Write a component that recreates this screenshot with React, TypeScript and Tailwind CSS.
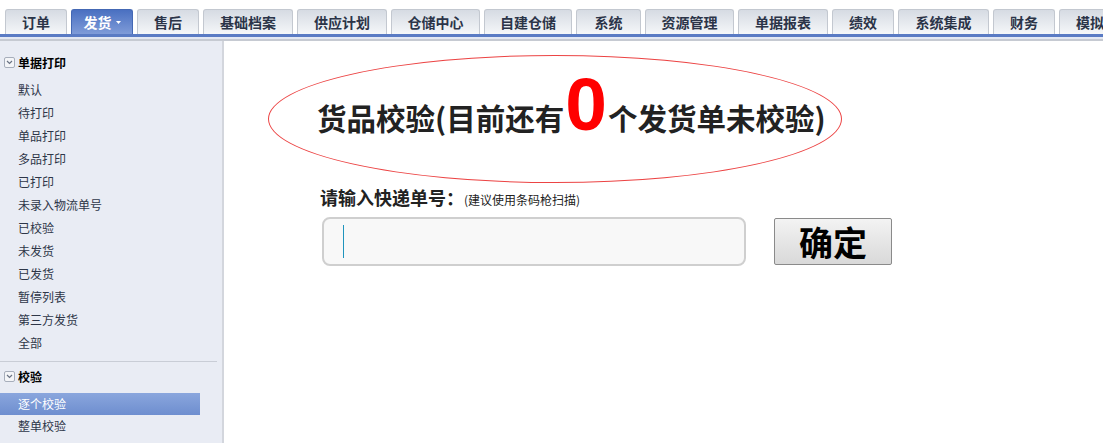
import { useState } from "react";

const tabs: [string, number][] = [
  ["订单", 62],
  ["发货", 62],
  ["售后", 62],
  ["基础档案", 90],
  ["供应计划", 90],
  ["仓储中心", 89],
  ["自建仓储", 88],
  ["系统", 65],
  ["资源管理", 89],
  ["单据报表", 90],
  ["绩效", 62],
  ["系统集成", 91],
  ["财务", 62],
  ["模拟", 62],
];

const printItems = [
  "默认",
  "待打印",
  "单品打印",
  "多品打印",
  "已打印",
  "未录入物流单号",
  "已校验",
  "未发货",
  "已发货",
  "暂停列表",
  "第三方发货",
  "全部",
];

const checkItems = ["逐个校验", "整单校验"];

function FoldIcon() {
  return (
    <span className="mr-[3px] grid h-[11px] w-[11px] place-items-center rounded-[2px] border border-[#a7aebb] bg-[#f4f5f8]">
      <svg width="7" height="5" viewBox="0 0 7 5" aria-hidden="true">
        <path d="M1 1 L3.5 3.5 L6 1" fill="none" stroke="#6a7384" strokeWidth="1.2" />
      </svg>
    </span>
  );
}

export default function App() {
  const [active, setActive] = useState("逐个校验");

  return (
    <div className="flex h-[443px] w-[1103px] flex-col overflow-hidden bg-white font-['Noto_Sans_CJK_SC','Liberation_Sans',sans-serif]">
      <header className="shrink-0">
        <nav className="flex h-[34px] items-end gap-[4px] overflow-hidden pl-[5px]">
          {tabs.map(([label, width]) => {
            const isActive = label === "发货";
            return (
              <div
                key={label}
                style={{ width }}
                className={
                  isActive
                    ? "flex h-[25px] shrink-0 items-center justify-center rounded-t-[3px] border border-b-0 border-[#4468b4] bg-gradient-to-b from-[#4a70c1] to-[#7f9bd8] text-[14px] font-bold leading-none text-white"
                    : "flex h-[25px] shrink-0 items-center justify-center rounded-t-[3px] border border-b-0 border-[#c3c8d0] bg-gradient-to-b from-[#d6dbe3] to-[#f5f7f9] text-[14px] font-bold leading-none text-[#2b3448]"
                }
              >
                {label}
                {isActive && (
                  <svg className="ml-[4px]" width="5" height="3" viewBox="0 0 5 3" aria-hidden="true">
                    <path d="M0 0 H5 L2.5 3 Z" fill="#fff" />
                  </svg>
                )}
              </div>
            );
          })}
        </nav>
        <div className="h-[3px] bg-[#5a7bc4]" />
        <div className="h-[2px] bg-[#e3e8f3]" />
        <div className="h-[2px] bg-[#c6cad2]" />
      </header>

      <div className="flex min-h-0 flex-1">
        <aside className="w-[224px] shrink-0 border-r-2 border-[#d3d6dd] bg-[#e9ecf4] pt-[10px] pr-[5px]">
          <div className="flex h-[23px] items-center pl-[4px] text-[12px] font-bold text-black">
            <FoldIcon />
            单据打印
          </div>
          <ul className="mt-[4px] w-[200px]">
            {printItems.map((item) => (
              <li key={item} className="flex h-[23px] items-center pl-[18px] text-[12px] text-[#2e3648]">
                {item}
              </li>
            ))}
          </ul>
          <div className="mt-[7px] h-px bg-[#c9cdd6]" />
          <div className="mt-[3px] flex h-[23px] items-center pl-[4px] text-[12px] font-bold text-black">
            <FoldIcon />
            校验
          </div>
          <ul className="mt-[5px] w-[200px]">
            {checkItems.map((item) => (
              <li
                key={item}
                onClick={() => setActive(item)}
                className={
                  active === item
                    ? "flex h-[22px] items-center bg-gradient-to-b from-[#8aa6dd] to-[#6e8ecf] pl-[18px] text-[12px] text-white"
                    : "flex h-[22px] items-center pl-[18px] text-[12px] text-[#2e3648]"
                }
              >
                {item}
              </li>
            ))}
          </ul>
        </aside>

        <main className="min-w-0 flex-1 pt-[14px]">
          <div className="ml-[44px] h-[128px] w-[574px] rounded-[50%] border border-[#ec4444] pt-[11px] pl-[48px]">
            <h1 className="flex items-baseline whitespace-nowrap leading-none text-[#222] font-bold">
              <span className="shrink-0 text-[29.5px]">货品校验(目前还有</span>
              <span className="mx-[1px] shrink-0 font-['Liberation_Sans',sans-serif] text-[75px] text-[#ff0000]">0</span>
              <span className="shrink-0 text-[29.5px]">个发货单未校验)</span>
            </h1>
          </div>

          <div className="mt-[1px] ml-[96px] flex h-[20px] items-baseline whitespace-nowrap">
            <span className="text-[18px] font-bold text-[#222]">请输入快递单号：</span>
            <span className="text-[12px] text-[#222]">(建议使用条码枪扫描)</span>
          </div>

          <div className="mt-[13px] ml-[98px] flex items-center">
            <div className="flex h-[49px] w-[424px] items-center rounded-[8px] border-2 border-[#cfcfcf] bg-[#f8f8f8] pl-[19px]">
              <span className="h-[33px] w-px bg-[#1f94bd]" />
            </div>
            <button
              type="button"
              className="ml-[28px] flex h-[47px] w-[118px] items-center justify-center rounded-[2px] border border-[#8a8a8a] bg-gradient-to-b from-[#f3f3f3] to-[#d9d9d9] text-[34px] font-bold leading-none text-black"
            >
              确定
            </button>
          </div>
        </main>
      </div>
    </div>
  );
}
